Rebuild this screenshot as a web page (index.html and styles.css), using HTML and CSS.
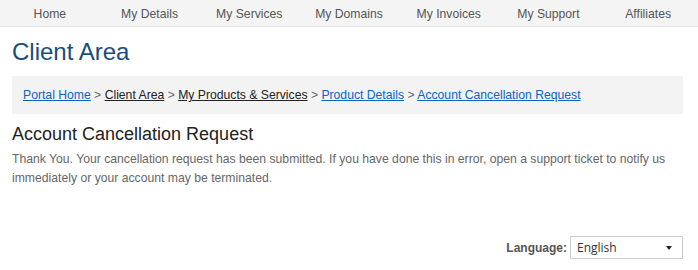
FILE: index.html
```html
<!DOCTYPE html>
<html lang="en">
<head>
    <meta charset="UTF-8">
    <title>Client Area</title>
    <link rel="stylesheet" href="styles.css">
</head>
<body>
    <ul class="topnav">
        <li><a href="#">Home</a></li>
        <li><a href="#">My Details</a></li>
        <li><a href="#">My Services</a></li>
        <li><a href="#">My Domains</a></li>
        <li><a href="#">My Invoices</a></li>
        <li><a href="#">My Support</a></li>
        <li><a href="#">Affiliates</a></li>
    </ul>

    <div class="content">
        <h1>Client Area</h1>

        <div class="breadcrumb">
            <a href="#">Portal Home</a> &gt;
            <a href="#" class="visited">Client Area</a> &gt;
            <a href="#" class="visited">My Products &amp; Services</a> &gt;
            <a href="#">Product Details</a> &gt;
            <a href="#">Account Cancellation Request</a>
        </div>

        <h2>Account Cancellation Request</h2>
        <p>Thank You. Your cancellation request has been submitted. If you have done this in error, open a support ticket to notify us immediately or your account may be terminated.</p>

        <div class="language">
            <label for="language">Language:</label>
            <div class="select-wrap">
                <select id="language" name="language">
                    <option>English</option>
                </select>
            </div>
        </div>
    </div>
</body>
</html>
```

FILE: styles.css
```css
body {
    font-family: Arial, "Liberation Sans", sans-serif;
    margin: 0;
    color: #333;
}
.topnav {
    display: grid;
    grid-template-columns: repeat(7, 1fr);
    list-style: none;
    margin: 0;
    padding: 0;
    height: 26px;
    background-color: #f4f4f4;
    border-bottom: 1px solid #e6e6e6;
}
.topnav li {
    text-align: center;
    line-height: 25px;
}
.topnav a {
    color: #555;
    font-size: 12.2px;
    text-decoration: none;
}
.content {
    padding: 0 15px 0 12px;
}
h1 {
    margin: 11px 0 0;
    font-size: 24px;
    font-weight: normal;
    color: #1b4c7c;
    line-height: 28px;
}
.breadcrumb {
    margin-top: 10px;
    height: 38px;
    padding: 0 11px;
    background-color: #f3f3f3;
    font-size: 12.2px;
    line-height: 38px;
    color: #666;
}
.breadcrumb a {
    color: #0a64c4;
}
.breadcrumb a.visited {
    color: #222;
}
h2 {
    margin: 10px 0 0;
    font-size: 18px;
    font-weight: normal;
    color: #222;
    line-height: 20px;
}
p {
    margin: 6px 0 0;
    font-size: 12.2px;
    line-height: 19px;
    color: #666;
}
.language {
    display: flex;
    justify-content: flex-end;
    align-items: center;
    gap: 3px;
    margin-top: 48px;
}
.language label {
    font-size: 12px;
    font-weight: bold;
    color: #555;
}
.select-wrap {
    position: relative;
    display: flex;
}
.select-wrap::after {
    content: "";
    position: absolute;
    right: 11px;
    top: 10px;
    border-left: 3.5px solid transparent;
    border-right: 3.5px solid transparent;
    border-top: 4px solid #222;
    pointer-events: none;
}
select {
    appearance: none;
    width: 113px;
    height: 23px;
    margin: 0;
    padding: 0 0 0 6px;
    font-family: "Open Sans", "Noto Sans", sans-serif;
    font-size: 12px;
    color: #333;
    border: 1px solid #ccc;
    border-radius: 0;
    background-color: #fff;
}
```
